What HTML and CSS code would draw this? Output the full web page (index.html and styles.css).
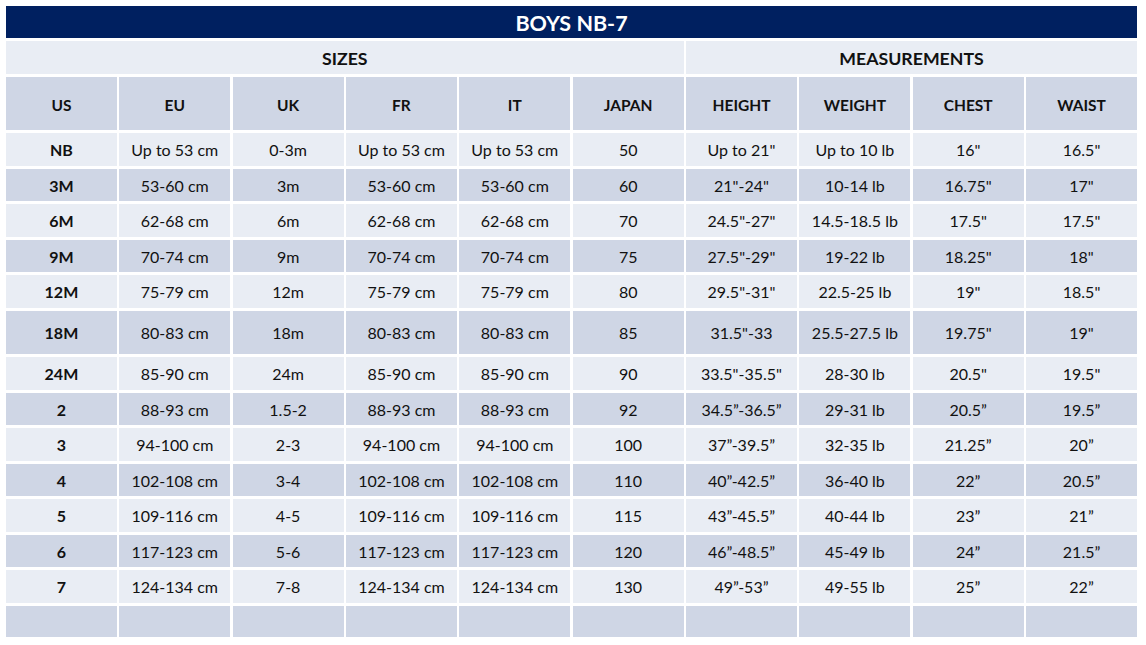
FILE: index.html
```html
<!DOCTYPE html>
<html>
<head>
<meta charset="utf-8">
<link rel="stylesheet" href="styles.css">
</head>
<body>
<div class="chart">
  <div class="title">BOYS NB-7</div>
  <div class="group light sizes">SIZES</div>
  <div class="group light meas">MEASUREMENTS</div>

  <div class="c dark b hd">US</div><div class="c dark b hd">EU</div><div class="c dark b hd">UK</div><div class="c dark b hd">FR</div><div class="c dark b hd">IT</div><div class="c dark b hd">JAPAN</div><div class="c dark b hd">HEIGHT</div><div class="c dark b hd">WEIGHT</div><div class="c dark b hd">CHEST</div><div class="c dark b hd">WAIST</div>

  <div class="c light b">NB</div><div class="c light">Up to 53 cm</div><div class="c light">0-3m</div><div class="c light">Up to 53 cm</div><div class="c light">Up to 53 cm</div><div class="c light">50</div><div class="c light">Up to 21"</div><div class="c light">Up to 10 lb</div><div class="c light">16"</div><div class="c light">16.5"</div>

  <div class="c dark b">3M</div><div class="c dark">53-60 cm</div><div class="c dark">3m</div><div class="c dark">53-60 cm</div><div class="c dark">53-60 cm</div><div class="c dark">60</div><div class="c dark">21"-24"</div><div class="c dark">10-14 lb</div><div class="c dark">16.75"</div><div class="c dark">17"</div>

  <div class="c light b">6M</div><div class="c light">62-68 cm</div><div class="c light">6m</div><div class="c light">62-68 cm</div><div class="c light">62-68 cm</div><div class="c light">70</div><div class="c light">24.5"-27"</div><div class="c light">14.5-18.5 lb</div><div class="c light">17.5"</div><div class="c light">17.5"</div>

  <div class="c dark b">9M</div><div class="c dark">70-74 cm</div><div class="c dark">9m</div><div class="c dark">70-74 cm</div><div class="c dark">70-74 cm</div><div class="c dark">75</div><div class="c dark">27.5"-29"</div><div class="c dark">19-22 lb</div><div class="c dark">18.25"</div><div class="c dark">18"</div>

  <div class="c light b">12M</div><div class="c light">75-79 cm</div><div class="c light">12m</div><div class="c light">75-79 cm</div><div class="c light">75-79 cm</div><div class="c light">80</div><div class="c light">29.5"-31"</div><div class="c light">22.5-25 lb</div><div class="c light">19"</div><div class="c light">18.5"</div>

  <div class="c dark b">18M</div><div class="c dark">80-83 cm</div><div class="c dark">18m</div><div class="c dark">80-83 cm</div><div class="c dark">80-83 cm</div><div class="c dark">85</div><div class="c dark">31.5"-33</div><div class="c dark">25.5-27.5 lb</div><div class="c dark">19.75"</div><div class="c dark">19"</div>

  <div class="c light b">24M</div><div class="c light">85-90 cm</div><div class="c light">24m</div><div class="c light">85-90 cm</div><div class="c light">85-90 cm</div><div class="c light">90</div><div class="c light">33.5"-35.5"</div><div class="c light">28-30 lb</div><div class="c light">20.5"</div><div class="c light">19.5"</div>

  <div class="c dark b">2</div><div class="c dark">88-93 cm</div><div class="c dark">1.5-2</div><div class="c dark">88-93 cm</div><div class="c dark">88-93 cm</div><div class="c dark">92</div><div class="c dark">34.5”-36.5”</div><div class="c dark">29-31 lb</div><div class="c dark">20.5”</div><div class="c dark">19.5”</div>

  <div class="c light b">3</div><div class="c light">94-100 cm</div><div class="c light">2-3</div><div class="c light">94-100 cm</div><div class="c light">94-100 cm</div><div class="c light">100</div><div class="c light">37”-39.5”</div><div class="c light">32-35 lb</div><div class="c light">21.25”</div><div class="c light">20”</div>

  <div class="c dark b">4</div><div class="c dark">102-108 cm</div><div class="c dark">3-4</div><div class="c dark">102-108 cm</div><div class="c dark">102-108 cm</div><div class="c dark">110</div><div class="c dark">40”-42.5”</div><div class="c dark">36-40 lb</div><div class="c dark">22”</div><div class="c dark">20.5”</div>

  <div class="c light b">5</div><div class="c light">109-116 cm</div><div class="c light">4-5</div><div class="c light">109-116 cm</div><div class="c light">109-116 cm</div><div class="c light">115</div><div class="c light">43”-45.5”</div><div class="c light">40-44 lb</div><div class="c light">23”</div><div class="c light">21”</div>

  <div class="c dark b">6</div><div class="c dark">117-123 cm</div><div class="c dark">5-6</div><div class="c dark">117-123 cm</div><div class="c dark">117-123 cm</div><div class="c dark">120</div><div class="c dark">46”-48.5”</div><div class="c dark">45-49 lb</div><div class="c dark">24”</div><div class="c dark">21.5”</div>

  <div class="c light b">7</div><div class="c light">124-134 cm</div><div class="c light">7-8</div><div class="c light">124-134 cm</div><div class="c light">124-134 cm</div><div class="c light">130</div><div class="c light">49”-53”</div><div class="c light">49-55 lb</div><div class="c light">25”</div><div class="c light">22”</div>

  <div class="c dark"></div><div class="c dark"></div><div class="c dark"></div><div class="c dark"></div><div class="c dark"></div><div class="c dark"></div><div class="c dark"></div><div class="c dark"></div><div class="c dark"></div><div class="c dark"></div>
</div>
</body>
</html>
```

FILE: styles.css
```css
html, body {
  margin: 0;
  background: #ffffff;
}
body {
  padding: 6px 0 0 6px;
  font-family: Lato, "Open Sans", "Liberation Sans", sans-serif;
  font-size: 16px;
  color: #111111;
}
.chart {
  width: 1131px;
  display: grid;
  grid-template-columns: repeat(10, 1fr);
  column-gap: 2.5px;
  row-gap: 3px;
  grid-template-rows: 32px 33px 53px repeat(5, 32.5px) 43.5px repeat(7, 32.5px) 31px;
}
.title {
  grid-column: 1 / span 10;
  background: #002060;
  color: #ffffff;
  font-weight: 700;
  font-size: 21.5px;
  display: flex;
  align-items: center;
  justify-content: center;
  padding-top: 2px;
}
.group {
  font-weight: 700;
  font-size: 17.7px;
  display: flex;
  align-items: center;
  justify-content: center;
  padding-top: 2px;
}
.sizes { grid-column: 1 / span 6; }
.meas { grid-column: 7 / span 4; }
.c {
  display: flex;
  align-items: center;
  justify-content: center;
  white-space: nowrap;
  padding-top: 1px;
}
.b { font-weight: 700; }
.hd { font-size: 15.5px; padding-top: 2px; }
.light { background: #e9edf4; }
.dark { background: #cfd6e5; }
```
